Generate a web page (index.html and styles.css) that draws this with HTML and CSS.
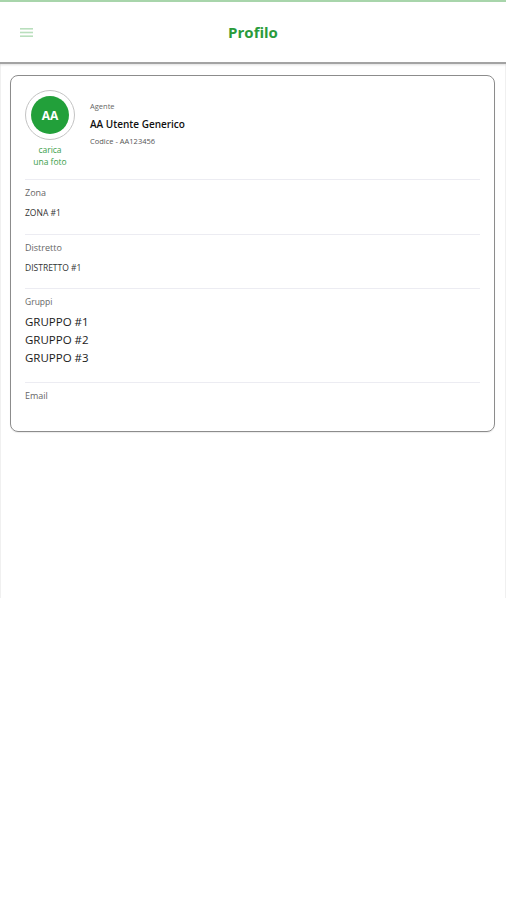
FILE: index.html
```html
<!DOCTYPE html>
<html lang="it">
<head>
<meta charset="utf-8">
<title>Profilo</title>
<link rel="stylesheet" href="styles.css">
</head>
<body>
<header class="topbar">
  <button class="menu-btn" aria-label="menu">
    <svg width="13" height="9" viewBox="0 0 13 9"><rect x="0" y="0" width="13" height="1.6" fill="#b9dfbd"/><rect x="0" y="3.7" width="13" height="1.6" fill="#b9dfbd"/><rect x="0" y="7.4" width="13" height="1.6" fill="#b9dfbd"/></svg>
  </button>
  <h1 class="title">Profilo</h1>
</header>
<main class="content">
  <section class="card">
    <div class="profile">
      <div class="avatar-col">
        <div class="avatar-ring"><div class="avatar">AA</div></div>
        <div class="upload">carica<br>una foto</div>
      </div>
      <div class="info">
        <div class="role">Agente</div>
        <div class="name">AA Utente Generico</div>
        <div class="code">Codice - AA123456</div>
      </div>
    </div>
    <div class="field">
      <div class="label">Zona</div>
      <div class="value">ZONA #1</div>
    </div>
    <div class="field tight">
      <div class="label">Distretto</div>
      <div class="value">DISTRETTO #1</div>
    </div>
    <div class="field groups">
      <div class="label">Gruppi</div>
      <div class="group">GRUPPO #1</div>
      <div class="group">GRUPPO #2</div>
      <div class="group">GRUPPO #3</div>
    </div>
    <div class="field email">
      <div class="label">Email</div>
    </div>
  </section>
</main>
</body>
</html>
```
FILE: styles.css
```css
* { box-sizing: border-box; }
html, body { margin: 0; padding: 0; background: #fff; }
body { font-family: "Open Sans", "Noto Sans", sans-serif; color: #222; }

.topbar {
  position: relative;
  height: 64px;
  border-top: 2px solid #a8d5ab;
  border-bottom: 2px solid #a3a3a3;
  box-shadow: 0 1px 2px rgba(0,0,0,0.12);
  display: flex;
  align-items: center;
  justify-content: center;
  background: #fff;
}
.menu-btn {
  position: absolute;
  left: 20px;
  top: 26px;
  padding: 0;
  border: 0;
  background: none;
  line-height: 0;
}
.title {
  margin: 0;
  font-size: 15px;
  font-weight: 700;
  color: #2a9b3b;
  line-height: 20px;
}

.content {
  height: 534px;
  border-left: 1px solid #f0f0f0;
  border-right: 1px solid #f0f0f0;
  padding: 11px 10px 0 9px;
}

.card {
  border: 1px solid #8c8c8c;
  border-radius: 8px;
  padding: 14px 14px 0 14px;
  box-shadow: 0 1px 1px rgba(0,0,0,0.08);
}

.profile {
  display: flex;
  gap: 15px;
  padding-bottom: 11px;
}
.avatar-col {
  display: flex;
  flex-direction: column;
  align-items: center;
  width: 50px;
}
.avatar-ring {
  width: 50px;
  height: 50px;
  border-radius: 50%;
  border: 1px solid #c4c4c4;
  padding: 5px;
}
.avatar {
  width: 38px;
  height: 38px;
  border-radius: 50%;
  background: #22a03a;
  color: #fff;
  font-weight: 700;
  font-size: 12px;
  display: flex;
  align-items: center;
  justify-content: center;
}
.upload {
  margin-top: 4px;
  font-size: 8.5px;
  line-height: 12px;
  color: #3a9e4a;
  text-align: center;
}
.info { padding-top: 10px; }
.role { font-size: 7.5px; line-height: 12px; color: #666; }
.name { margin-top: 4px; font-size: 10px; line-height: 16px; font-weight: 600; color: #111; }
.code { margin-top: 3px; font-size: 7.5px; line-height: 12px; color: #555; }

.field {
  border-top: 1px solid #ececf2;
  padding: 6px 0 14px;
}
.field.tight { padding-bottom: 13px; }
.label { font-size: 9px; line-height: 14px; color: #666; }
.value { margin-top: 6px; font-size: 8.5px; line-height: 14px; color: #333; }
.groups { padding-bottom: 15px; }
.groups .label { margin-bottom: 4px; font-size: 8.5px; }
.group { font-size: 11.5px; line-height: 18px; color: #1a1a1a; }
.email { padding-bottom: 28px; }
```
